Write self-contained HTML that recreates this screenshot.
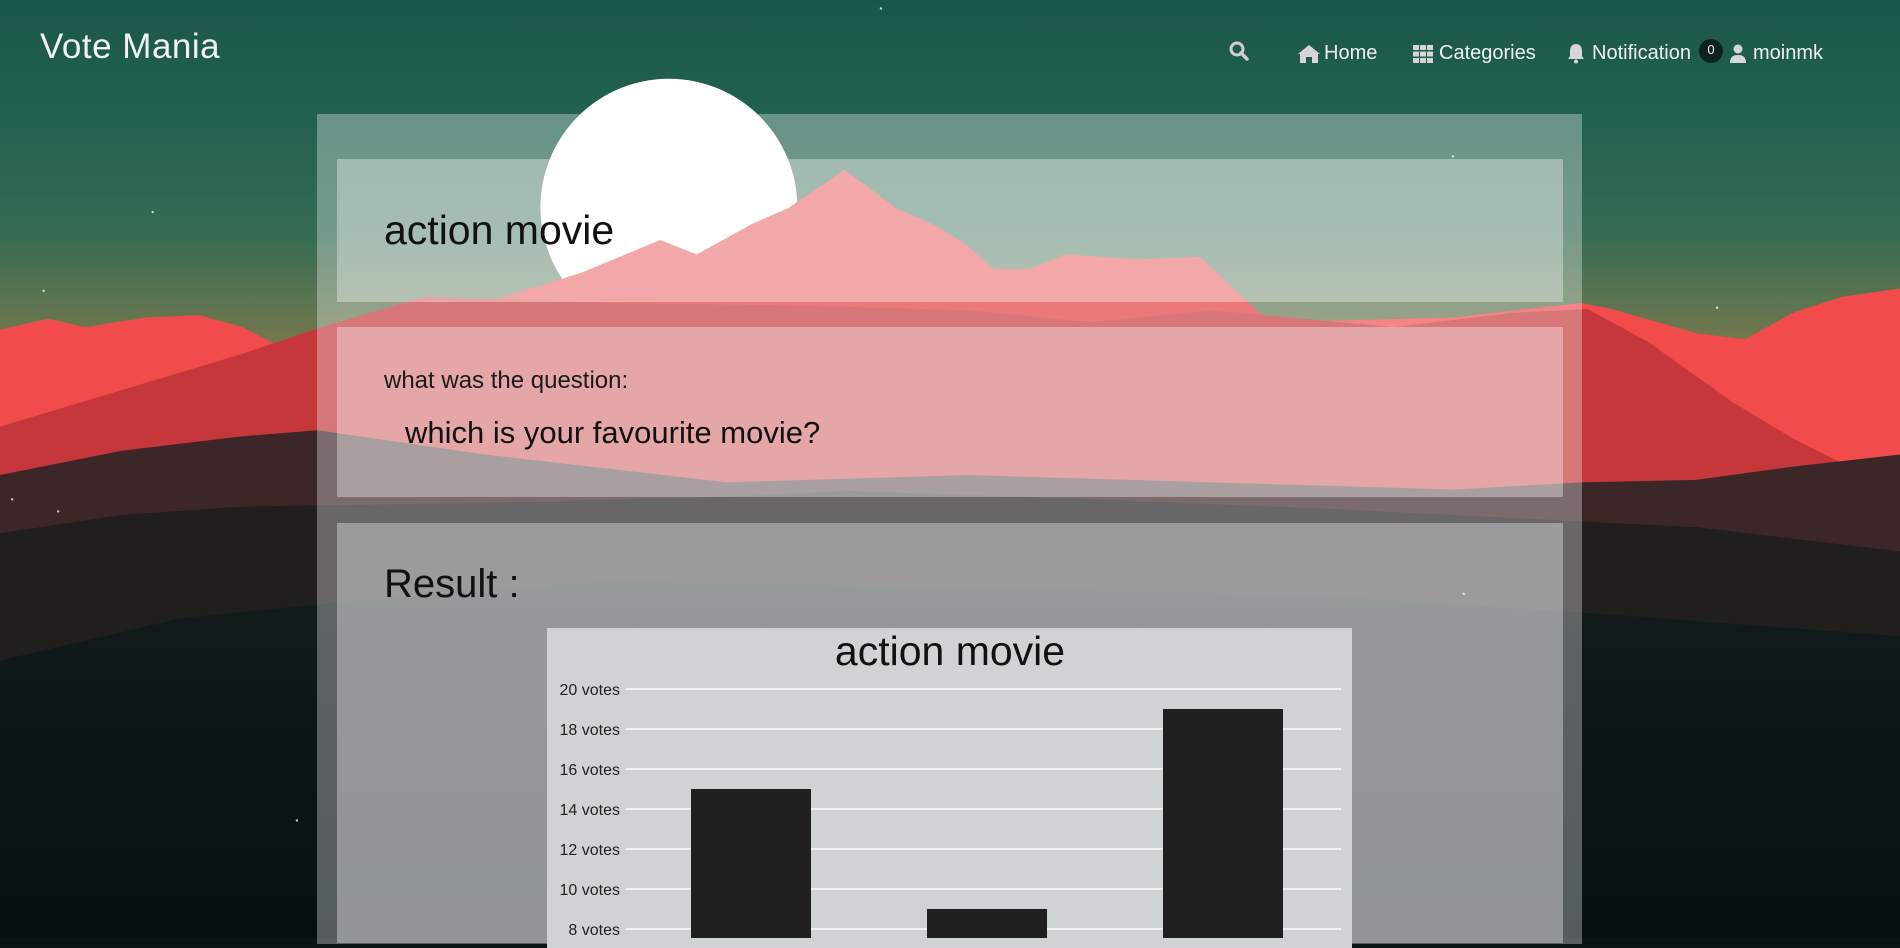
<!DOCTYPE html>
<html><head><meta charset="utf-8">
<style>
*{margin:0;padding:0;box-sizing:border-box}
html,body{width:1900px;height:938px;overflow:hidden;background:#0a1414;font-family:"Liberation Sans",sans-serif}
#bg{position:absolute;left:0;top:0;width:1900px;height:938px}
.abs{position:absolute}
.logo{left:40px;top:27px;font-size:35px;color:#f2f2f2;letter-spacing:0.5px}
.nav{top:40px;font-size:20px;color:#f0f0f0;display:flex;align-items:center}
.outer{left:317px;top:114px;width:1265px;height:830px;background:rgba(255,255,255,0.32)}
.card{left:337px;width:1226px;background:rgba(255,255,255,0.35)}
.chart{left:547px;top:628px;width:805px;height:320px;background:#d0d3d3}
</style></head><body>
<svg id="bg" viewBox="0 0 1568 774" preserveAspectRatio="none">
<defs>
<linearGradient id="sky" x1="0" y1="0" x2="0" y2="1">
<stop offset="0" stop-color="#1a574b"/>
<stop offset="0.12" stop-color="#22604f"/>
<stop offset="0.25" stop-color="#356b52"/>
<stop offset="0.33" stop-color="#607550"/>
<stop offset="0.4" stop-color="#8a7a48"/>
<stop offset="1" stop-color="#8a7a48"/>
</linearGradient>
<linearGradient id="ground" x1="0" y1="0" x2="0" y2="1">
<stop offset="0" stop-color="#131b1b"/>
<stop offset="1" stop-color="#061010"/>
</linearGradient>
</defs>
<rect width="1568" height="774" fill="url(#sky)"/>
<circle cx="552" cy="171" r="106" fill="#ffffff"/>
<polygon fill="#e2393c" points="400,250 480,225 545,198 575,210 620,185 650,172 697,140 740,172 770,185 795,200 820,222 850,222 880,210 940,214 990,212 1020,240 1050,268 1080,282 1120,286 1200,270 1250,280 1300,300 1568,420 0,420"/>
<polygon fill="#f24b4b" points="0,272 40,263 70,270 120,262 165,260 200,270 225,283 260,280 330,262 420,255 500,270 600,280 900,270 1200,262 1305,250 1330,255 1400,275 1440,280 1480,258 1520,245 1568,238 1568,420 0,420"/>
<polygon fill="#c5373a" points="0,352 100,322 200,292 265,270 350,245 500,250 650,252 800,256 900,266 1000,256 1150,270 1250,258 1310,255 1360,282 1430,332 1480,362 1520,382 1568,392 1568,440 0,440"/>
<polygon fill="#3d2628" points="0,392 100,372 200,360 262,355 400,375 600,398 800,392 1000,398 1200,404 1305,398 1400,396 1480,385 1568,375 1568,520 0,520"/>
<polygon fill="#211e1e" points="0,440 100,425 200,418 400,415 600,410 700,405 900,412 1100,420 1300,430 1400,435 1568,455 1568,774 0,774"/>
<polygon fill="url(#ground)" points="0,545 150,510 300,495 500,480 800,485 1100,492 1300,505 1568,525 1568,774 0,774"/>
<g fill="#dfe" opacity="0.8">
<circle cx="126" cy="175" r="1"/><circle cx="36" cy="240" r="1"/><circle cx="10" cy="412" r="1"/><circle cx="48" cy="422" r="1"/><circle cx="1417" cy="254" r="1"/><circle cx="1199" cy="129" r="1"/><circle cx="245" cy="677" r="1"/><circle cx="1208" cy="490" r="1"/><circle cx="727" cy="7" r="1"/>
</g>
</svg>

<div class="abs logo">Vote Mania</div>

<div class="abs nav" style="left:1229px;top:41px">
<svg width="20" height="22" viewBox="0 0 20 22"><circle cx="8" cy="8" r="6" fill="none" stroke="#cfcfcf" stroke-width="3"/><path d="M12 12 L18 18" stroke="#cfcfcf" stroke-width="3.5" stroke-linecap="round"/></svg>
</div>
<div class="abs nav" style="left:1297px;top:42px">
<svg width="24" height="20" viewBox="0 0 24 20"><path d="M12 1 L1 10 L3 10 L3 19 L9 19 L9 13 L15 13 L15 19 L21 19 L21 10 L23 10 Z" fill="#d6d6d6"/></svg>
<span style="margin-left:3px">Home</span>
</div>
<div class="abs nav" style="left:1413px;top:42px">
<svg width="21" height="20" viewBox="0 0 21 20"><g fill="#d6d6d6"><rect x="0" y="1" width="6" height="5"/><rect x="7" y="1" width="6" height="5"/><rect x="14" y="1" width="6" height="5"/><rect x="0" y="7.5" width="6" height="5"/><rect x="7" y="7.5" width="6" height="5"/><rect x="14" y="7.5" width="6" height="5"/><rect x="0" y="14" width="6" height="5"/><rect x="7" y="14" width="6" height="5"/><rect x="14" y="14" width="6" height="5"/></g></svg>
<span style="margin-left:5px">Categories</span>
</div>
<div class="abs nav" style="left:1567px;top:42px">
<svg width="18" height="21" viewBox="0 0 18 21"><path d="M9 1 C5 1 3 4 3 8 L3 13 L1 16 L17 16 L15 13 L15 8 C15 4 13 1 9 1 Z" fill="#d6d6d6"/><circle cx="9" cy="18.5" r="2" fill="#d6d6d6"/></svg>
<span style="margin-left:7px">Notification</span>
</div>
<div class="abs" style="left:1699px;top:39px;width:24px;height:24px;border-radius:12px;background:#0e2320;color:#f0f0f0;font-size:13px;text-align:center;line-height:22px">0</div>
<div class="abs nav" style="left:1729px;top:42px">
<svg width="18" height="20" viewBox="0 0 18 20"><circle cx="9" cy="5" r="4.5" fill="#d6d6d6"/><path d="M1 19 C1 13 4 11 9 11 C14 11 17 13 17 19 Z" fill="#d6d6d6"/></svg>
<span style="margin-left:6px">moinmk</span>
</div>

<div class="abs outer"></div>
<div class="abs card" style="top:159px;height:143px"></div>
<div class="abs card" style="top:327px;height:170px"></div>
<div class="abs card" style="top:523px;height:420px"></div>

<div class="abs" style="left:384px;top:207px;font-size:41px;color:#111">action movie</div>
<div class="abs" style="left:384px;top:367px;font-size:24px;color:#1a1a1a">what was the question:</div>
<div class="abs" style="left:405px;top:415px;font-size:31px;color:#111">which is your favourite movie?</div>
<div class="abs" style="left:384px;top:562px;font-size:40px;color:#111">Result :</div>

<div class="abs chart"></div>
<svg class="abs" style="left:547px;top:628px" width="805" height="310" viewBox="547 628 805 310">
<text x="950" y="665" font-size="41" text-anchor="middle" fill="#111" font-family="Liberation Sans,sans-serif">action movie</text>
<g stroke="#f2f2f2" stroke-width="2">
<line x1="626" y1="689" x2="1341" y2="689"/><line x1="626" y1="729" x2="1341" y2="729"/><line x1="626" y1="769" x2="1341" y2="769"/><line x1="626" y1="809" x2="1341" y2="809"/><line x1="626" y1="849" x2="1341" y2="849"/><line x1="626" y1="889" x2="1341" y2="889"/><line x1="626" y1="929" x2="1341" y2="929"/>
</g>
<g font-size="16" fill="#222" text-anchor="end" font-family="Liberation Sans,sans-serif">
<text x="620" y="695">20 votes</text><text x="620" y="735">18 votes</text><text x="620" y="775">16 votes</text><text x="620" y="815">14 votes</text><text x="620" y="855">12 votes</text><text x="620" y="895">10 votes</text><text x="620" y="935">8 votes</text>
</g>
<g fill="#1f1f1f">
<rect x="691" y="789" width="120" height="160"/>
<rect x="927" y="909" width="120" height="40"/>
<rect x="1163" y="709" width="120" height="240"/>
</g>
</svg>
</body></html>
